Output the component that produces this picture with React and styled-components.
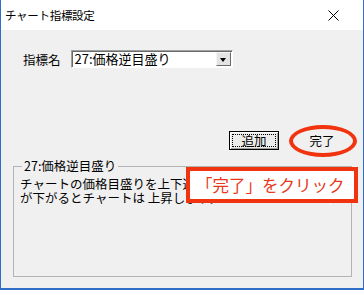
import React from 'react';
import styled, { createGlobalStyle } from 'styled-components';

const GlobalStyle = createGlobalStyle`
  html, body {
    margin: 0;
    padding: 0;
    background: #ffffff;
  }
  body {
    font-family: "Noto Sans CJK JP", "Noto Sans", sans-serif;
  }
`;

const Window = styled.div`
  width: 364px;
  height: 290px;
  box-sizing: border-box;
  border-left: 1px solid #2f6ec6;
  border-right: 1px solid #2f6ec6;
  border-bottom: 2px solid #2f6ec6;
  display: flex;
  flex-direction: column;
  background: #f0f0f0;
  position: relative;
  overflow: hidden;
`;

const TitleBar = styled.div`
  height: 30px;
  flex: none;
  background: #ffffff;
  display: flex;
  align-items: center;
  justify-content: space-between;
  padding: 0 24px 0 4px;
`;

const Title = styled.span`
  font-size: 11.5px;
  color: #000;
  letter-spacing: -0.3px;
`;

const CloseIcon = styled.svg`
  width: 11px;
  height: 11px;
  display: block;
`;

const Body = styled.div`
  flex: 1;
  display: flex;
  flex-direction: column;
  padding: 20px 11px 0 11px;
`;

const FieldRow = styled.div`
  display: flex;
  align-items: center;
  gap: 10px;
  padding-left: 11px;
`;

const Label = styled.span`
  font-size: 12.5px;
  color: #000;
  line-height: 17px;
`;

const Combo = styled.div`
  width: 162px;
  height: 18px;
  box-sizing: border-box;
  background: #fff;
  border-top: 1px solid #a0a0a0;
  border-left: 1px solid #a0a0a0;
  border-right: 1px solid #fff;
  border-bottom: 1px solid #fff;
  box-shadow: inset 1px 1px 0 #6a6a6a;
  display: flex;
  align-items: center;
  justify-content: space-between;
`;

const ComboText = styled.span`
  font-size: 13px;
  line-height: 16px;
  padding-left: 3px;
  color: #000;
`;

const ComboButton = styled.div`
  width: 15px;
  height: 14px;
  margin-right: 1px;
  box-sizing: border-box;
  background: #e3e3e3;
  border-top: 1px solid #f4f4f4;
  border-left: 1px solid #f4f4f4;
  border-right: 1px solid #6a6a6a;
  border-bottom: 1px solid #6a6a6a;
  display: flex;
  align-items: center;
  justify-content: center;
  &::before {
    content: '';
    border-left: 3.5px solid transparent;
    border-right: 3.5px solid transparent;
    border-top: 4px solid #000;
    margin-top: 1px;
  }
`;

const ButtonRow = styled.div`
  display: flex;
  justify-content: flex-end;
  gap: 18px;
  margin-top: 63px;
  padding-right: 5px;
`;

const Button = styled.button`
  position: relative;
  width: 50px;
  height: 19px;
  box-sizing: border-box;
  padding: 0;
  font-family: inherit;
  font-size: 12.5px;
  line-height: 15px;
  color: #000;
  background: ${p => (p.$plain ? 'transparent' : '#ececec')};
  border: 1px solid ${p => (p.$plain ? 'transparent' : p.$default ? '#000' : '#8a8a8a')};
  box-shadow: ${p => (p.$plain ? 'none' : 'inset 1px 1px 0 #fff, inset -1px -1px 0 #a0a0a0')};
  &::after {
    content: '';
    display: ${p => (p.$focused ? 'block' : 'none')};
    position: absolute;
    inset: 2px;
    border: 1px dotted #000;
  }
`;

const Group = styled.fieldset`
  margin: 9px 0 0 1px;
  width: 339px;
  height: 118px;
  box-sizing: border-box;
  border: 1px solid #b4b4b4;
  border-radius: 0;
  padding: 0 0 0 3px;
  display: flex;
`;

const Legend = styled.legend`
  font-size: 12.5px;
  line-height: 14px;
  padding: 0 2px;
  margin-left: 5px;
  color: #000;
`;

const TextArea = styled.div`
  flex: 1;
  display: flex;
  margin-bottom: 2px;
`;

const Description = styled.div`
  flex: 1;
  font-size: 12.5px;
  line-height: 14px;
  color: #000;
  padding: 4px 0 0 3px;
  white-space: pre-line;
`;

const ScrollBar = styled.div`
  width: 21px;
  flex: none;
  border-left: 1px solid #fcfcfc;
  display: flex;
  align-items: flex-end;
  justify-content: center;
  padding-bottom: 7px;
  box-sizing: border-box;
`;

const Chevron = styled.svg`
  width: 9px;
  height: 6px;
  display: block;
`;

const Ellipse = styled.div`
  position: absolute;
  left: 288px;
  top: 125px;
  width: 68px;
  height: 32px;
  box-sizing: border-box;
  border: 4px solid #f2330f;
  border-radius: 50%;
`;

const Callout = styled.div`
  position: absolute;
  left: 185px;
  top: 167px;
  width: 172px;
  height: 36px;
  box-sizing: border-box;
  border: 4px solid #f2330f;
  background: #fff;
  display: flex;
  align-items: center;
  padding-left: 6px;
`;

const CalloutText = styled.span`
  font-size: 16.5px;
  color: #e8391d;
  line-height: 20px;
`;

export default function App() {
  return (
    <>
      <GlobalStyle />
      <Window>
        <TitleBar>
          <Title>チャート指標設定</Title>
          <CloseIcon viewBox="0 0 11 11">
            <path d="M0.5 0.5 L10.5 10.5 M10.5 0.5 L0.5 10.5" stroke="#000" strokeWidth="1" fill="none" />
          </CloseIcon>
        </TitleBar>
        <Body>
          <FieldRow>
            <Label>指標名</Label>
            <Combo>
              <ComboText>27:価格逆目盛り</ComboText>
              <ComboButton />
            </Combo>
          </FieldRow>
          <ButtonRow>
            <Button $default $focused>追加</Button>
            <Button $plain>完了</Button>
          </ButtonRow>
          <Group>
            <Legend>27:価格逆目盛り</Legend>
            <TextArea>
              <Description>
                {'チャートの価格目盛りを上下逆にします。価格\nが下がるとチャートは 上昇します。'}
              </Description>
              <ScrollBar>
                <Chevron viewBox="0 0 9 6">
                  <path d="M1 1 L4.5 4.5 L8 1" stroke="#b8b8b8" strokeWidth="1.2" fill="none" />
                </Chevron>
              </ScrollBar>
            </TextArea>
          </Group>
        </Body>
        <Ellipse />
        <Callout>
          <CalloutText>「完了」をクリック</CalloutText>
        </Callout>
      </Window>
    </>
  );
}
